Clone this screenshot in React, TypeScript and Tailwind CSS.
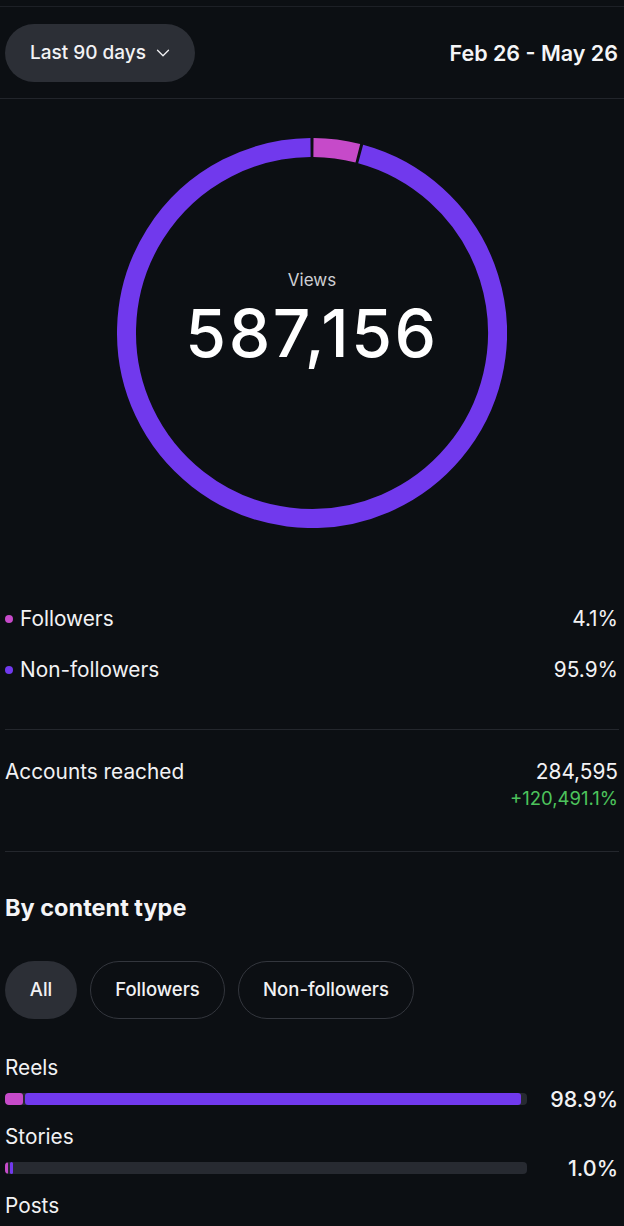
import { ChevronDown } from 'lucide-react'

const PURPLE = '#7139ed'
const PINK = '#c64ac9'

const CX = 195
const CY = 195
const R = 185.5
const STROKE = 19

function polar(deg: number) {
  const a = ((deg - 90) * Math.PI) / 180
  return [CX + R * Math.cos(a), CY + R * Math.sin(a)]
}

function arc(from: number, to: number) {
  const [x1, y1] = polar(from)
  const [x2, y2] = polar(to)
  const large = to - from > 180 ? 1 : 0
  return `M ${x1} ${y1} A ${R} ${R} 0 ${large} 1 ${x2} ${y2}`
}

function Ring() {
  // followers 4.1% starting at 12 o'clock, small gaps between segments
  const gap = 0.9
  const pinkEnd = 360 * 0.041
  return (
    <svg width={390} height={390} viewBox="0 0 390 390" className="block">
      <path d={arc(gap / 2, pinkEnd - gap / 2)} stroke={PINK} strokeWidth={STROKE} fill="none" />
      <path d={arc(pinkEnd + gap / 2, 360 - gap / 2)} stroke={PURPLE} strokeWidth={STROKE} fill="none" />
    </svg>
  )
}

function Legend({ color, label, value }: { color: string; label: string; value: string }) {
  return (
    <div className="flex h-[51px] items-center justify-between">
      <div className="flex items-center">
        <span className="ml-[5px] mr-[7px] size-[8px] rounded-full" style={{ background: color }} />
        <span className="text-[20.8px] text-[#f2f2f4]">{label}</span>
      </div>
      <span className="text-[20.8px] text-[#f2f2f4]">{value}</span>
    </div>
  )
}

function Bar({ label, pink, purple, value }: { label: string; pink: number; purple: number; value?: string }) {
  return (
    <div className="h-[69px]">
      <div className="text-[20.8px] leading-[24px] text-[#f2f2f4]">{label}</div>
      {value && (
        <div className="mt-[3px] flex items-center justify-between">
          <div className="flex h-[12px] w-[522px] gap-[2px] rounded-[4px] bg-[#272a31] overflow-hidden">
            <div className="h-full rounded-[3px]" style={{ width: pink, background: PINK }} />
            <div className="h-full rounded-[3px]" style={{ width: purple, background: PURPLE }} />
          </div>
          <span className="text-[21.5px] font-medium text-[#f2f2f4]">{value}</span>
        </div>
      )}
    </div>
  )
}

export default function App() {
  return (
    <div className="min-h-[1226px] bg-[#0c0f13] text-white overflow-hidden" style={{ fontFamily: 'Inter, "Liberation Sans", sans-serif' }}>
      <div className="h-[6px]" />
      <div className="border-t border-[#1d2026]" />

      <div className="mt-[17px] flex items-center justify-between pl-[5px] pr-[6px]">
        <button className="flex h-[58px] w-[190px] items-center rounded-full bg-[#2c2f36] pl-[25px] text-[19px] font-medium text-[#f2f2f4]">
          Last 90 days
          <ChevronDown className="ml-[6px] size-[22px]" strokeWidth={1.4} />
        </button>
        <span className="text-[21.5px] font-semibold text-[#f5f5f7]">Feb 26 - May 26</span>
      </div>

      <div className="mt-[16px] border-t border-[#22252b]" />

      <div className="relative mx-auto mt-[39px] w-[390px]">
        <Ring />
        <div className="absolute inset-0 flex flex-col items-center pt-[132px]">
          <span className="text-[17px] leading-[20px] text-[#cfd0d4]">Views</span>
          <span className="mt-[10px] text-[66px] font-medium leading-[66px] tracking-[2.5px] text-white">587,156</span>
        </div>
      </div>

      <div className="mt-[65px] pr-[6px]">
        <Legend color={PINK} label="Followers" value="4.1%" />
        <Legend color={PURPLE} label="Non-followers" value="95.9%" />
      </div>

      <div className="mx-[5px] mt-[34px] border-t border-[#24272d]" />

      <div className="mt-[30px] flex justify-between pl-[5px] pr-[6px]">
        <span className="text-[20.8px] leading-[24px] text-[#f2f2f4]">Accounts reached</span>
        <div className="flex flex-col items-end">
          <span className="text-[20.8px] leading-[24px] text-[#f2f2f4]">284,595</span>
          <span className="text-[18.5px] leading-[28px] text-[#4cc35c]">+120,491.1%</span>
        </div>
      </div>

      <div className="mx-[5px] mt-[39px] border-t border-[#24272d]" />

      <div className="mt-[42px] pl-[5px] text-[23.5px] font-bold leading-[28px] text-[#f5f5f7]">By content type</div>

      <div className="mt-[39px] flex gap-[13px] pl-[5px]">
        <button className="h-[58px] w-[72px] rounded-full bg-[#2c2f36] text-[18.5px] font-medium text-[#f2f2f4]">All</button>
        <button className="h-[58px] w-[135px] rounded-full border border-[#33363d] text-[18.5px] font-medium text-[#f2f2f4]">Followers</button>
        <button className="h-[58px] w-[176px] rounded-full border border-[#33363d] text-[18.5px] font-medium text-[#f2f2f4]">Non-followers</button>
      </div>

      <div className="mt-[37px] pl-[5px] pr-[6px]">
        <Bar label="Reels" pink={18} purple={496} value="98.9%" />
        <Bar label="Stories" pink={3} purple={3} value="1.0%" />
        <Bar label="Posts" pink={0} purple={0} />
      </div>
    </div>
  )
}
